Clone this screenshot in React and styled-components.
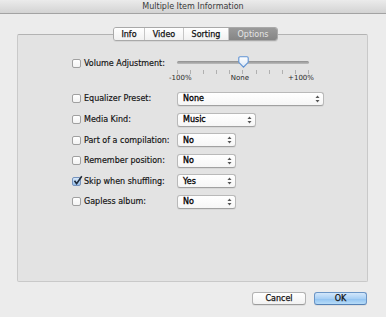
import React from 'react';
import styled, { createGlobalStyle } from 'styled-components';

const GlobalStyle = createGlobalStyle`
  html, body {
    margin: 0;
    padding: 0;
    background: #ececec;
  }
  body {
    font-family: "DejaVu Sans", "Liberation Sans", sans-serif;
    font-size: 8px;
    color: #111;
    -webkit-text-stroke: 0.15px currentColor;
  }
`;

const Window = styled.div`
  width: 386px;
  height: 317px;
  background: #ececec;
  display: flex;
  flex-direction: column;
  overflow: hidden;
`;

const TitleBar = styled.div`
  height: 14px;
  box-sizing: border-box;
  border-bottom: 1px solid #a3a3a3;
  background: linear-gradient(#ebebeb, #d3d3d3);
  display: flex;
  align-items: center;
  justify-content: center;
  color: #3a3a3a;
  font-size: 8px;
  -webkit-text-stroke: 0;
`;

const Body = styled.div`
  display: flex;
  flex-direction: column;
  padding-top: 13px;
`;

const Tabs = styled.div`
  display: flex;
  align-self: flex-start;
  margin-left: 113px;
  margin-bottom: -7px;
  height: 14px;
  box-sizing: border-box;
  border: 1px solid #a9a9a9;
  border-radius: 3px;
  overflow: hidden;
  position: relative;
  z-index: 1;
  box-shadow: 0 1px 0 rgba(0, 0, 0, 0.06);
`;

const Tab = styled.div`
  width: ${({ $w }) => $w}px;
  display: flex;
  align-items: center;
  justify-content: center;
  background: ${({ $active }) =>
    $active ? 'linear-gradient(#9a9a9a, #858585)' : 'linear-gradient(#ffffff, #f1f1f1)'};
  color: ${({ $active }) => ($active ? '#e6e6e6' : '#111')};
  border-left: ${({ $first }) => ($first ? 'none' : '1px solid #c6c6c6')};
  font-size: 8px;
  -webkit-text-stroke: ${({ $active }) => ($active ? '0' : '0.25px #111')};
`;

const GroupBox = styled.div`
  margin-left: 17px;
  width: 351px;
  height: 248px;
  box-sizing: border-box;
  background: #e3e3e3;
  border: 1px solid #c9c9c9;
  border-top-color: #b3b3b3;
  border-radius: 2px;
  padding: 21px 0 0 54px;
  display: flex;
  flex-direction: column;
  gap: 6.6px;
`;

const Row = styled.div`
  display: grid;
  grid-template-columns: 105px auto;
  align-items: ${({ $top }) => ($top ? 'start' : 'center')};
  margin-bottom: ${({ $extra }) => $extra || 0}px;
`;

const Label = styled.label`
  display: flex;
  align-items: center;
  gap: 3px;
  height: 14px;
  white-space: nowrap;
`;

const Box = styled.span`
  width: 9px;
  height: 9px;
  box-sizing: border-box;
  border: 1px solid ${({ $checked }) => ($checked ? '#7592bd' : '#a0a0a0')};
  border-radius: 2px;
  background: ${({ $checked }) =>
    $checked ? 'linear-gradient(#d5e6f8, #98c0ec)' : 'linear-gradient(#ffffff, #f3f3f3)'};
  position: relative;
  flex: none;
`;

const Check = styled.svg`
  position: absolute;
  left: 0px;
  top: -3px;
`;

const Checkbox = ({ checked }) => (
  <Box $checked={checked}>
    {checked && (
      <Check width="10" height="10" viewBox="0 0 10 10">
        <path d="M1.5 5.8 L3.6 8.6 L8.8 1.2" fill="none" stroke="#1e2a3a" strokeWidth="1.6" />
      </Check>
    )}
  </Box>
);

const Slider = styled.div`
  display: flex;
  flex-direction: column;
  width: 132px;
`;

const TrackArea = styled.div`
  height: 12px;
  position: relative;
  display: flex;
  align-items: center;
`;

const Track = styled.div`
  width: 100%;
  height: 3px;
  border-radius: 2px;
  background: linear-gradient(#8e8e8e, #bdbdbd);
`;

const Thumb = styled.svg`
  position: absolute;
  left: 61px;
  top: 0;
`;

const Ticks = styled.div`
  display: flex;
  justify-content: space-between;
  margin-top: 2px;
  height: 4px;
`;

const Tick = styled.span`
  width: 1px;
  height: 4px;
  background: #b0b0b0;
`;

const TickLabels = styled.div`
  display: flex;
  justify-content: space-between;
  width: 145px;
  margin-left: -8px;
  font-size: 7px;
  line-height: 8px;
  color: #2a2a2a;
  -webkit-text-stroke: 0;
`;

const Popup = styled.div`
  width: ${({ $w }) => $w}px;
  height: 14px;
  box-sizing: border-box;
  border: 1px solid #b9b9b9;
  border-bottom-color: #a1a1a1;
  border-radius: 3px;
  background: linear-gradient(#ffffff, #f6f6f6);
  box-shadow: 0 1px 0 rgba(0, 0, 0, 0.05);
  display: flex;
  align-items: center;
  justify-content: space-between;
  padding: 0 3px 0 5px;
  color: #000;
  -webkit-text-stroke: 0.3px #000;
`;

const Arrows = () => (
  <svg width="5" height="8" viewBox="0 0 5 8">
    <path d="M2.5 0.5 L4.5 3 L0.5 3 Z" fill="#555" />
    <path d="M2.5 7.5 L4.5 5 L0.5 5 Z" fill="#555" />
  </svg>
);

const Buttons = styled.div`
  display: flex;
  justify-content: flex-end;
  gap: 8px;
  margin-top: 10px;
  padding-right: 19px;
`;

const Button = styled.button`
  width: ${({ $w }) => $w}px;
  height: 13px;
  box-sizing: border-box;
  padding: 0;
  font-family: inherit;
  font-size: 8px;
  color: #111;
  -webkit-text-stroke: 0.25px #111;
  border-radius: 3px;
  border: 1px solid ${({ $primary }) => ($primary ? '#6b95c6' : '#b3b3b3')};
  border-bottom-color: ${({ $primary }) => ($primary ? '#5581b5' : '#9c9c9c')};
  background: ${({ $primary }) =>
    $primary
      ? 'linear-gradient(#d3e7fb, #a9d0f5 50%, #90c2f1 51%, #b7dcf8)'
      : 'linear-gradient(#ffffff, #f2f2f2)'};
  box-shadow: 0 1px 0 rgba(0, 0, 0, 0.06);
`;

const fields = [
  { label: 'Equalizer Preset:', value: 'None', w: 147 },
  { label: 'Media Kind:', value: 'Music', w: 79 },
  { label: 'Part of a compilation:', value: 'No', w: 59 },
  { label: 'Remember position:', value: 'No', w: 59 },
  { label: 'Skip when shuffling:', value: 'Yes', w: 59, checked: true },
  { label: 'Gapless album:', value: 'No', w: 59 },
];

const tabs = [
  { name: 'Info', w: 30 },
  { name: 'Video', w: 38 },
  { name: 'Sorting', w: 44 },
  { name: 'Options', w: 48, active: true },
];

export default function App() {
  return (
    <>
      <GlobalStyle />
      <Window>
        <TitleBar>Multiple Item Information</TitleBar>
        <Body>
          <Tabs>
            {tabs.map((t, i) => (
              <Tab key={t.name} $w={t.w} $active={t.active} $first={i === 0}>
                {t.name}
              </Tab>
            ))}
          </Tabs>
          <GroupBox>
            <Row $top $extra={3.4}>
              <Label>
                <Checkbox />
                Volume Adjustment:
              </Label>
              <Slider>
                <TrackArea>
                  <Track />
                  <Thumb width="11" height="12" viewBox="0 0 11 12">
                    <defs>
                      <linearGradient id="thumbFill" x1="0" y1="0" x2="0" y2="1">
                        <stop offset="0" stopColor="#ffffff" />
                        <stop offset="1" stopColor="#d9e6f6" />
                      </linearGradient>
                    </defs>
                    <path
                      d="M2 0.8 H9 Q10.2 0.8 10.2 2 V6.4 L5.5 11.2 L0.8 6.4 V2 Q0.8 0.8 2 0.8 Z"
                      fill="url(#thumbFill)"
                      stroke="#5f92d3"
                      strokeWidth="1.1"
                    />
                  </Thumb>
                </TrackArea>
                <Ticks>
                  {Array.from({ length: 11 }).map((_, i) => (
                    <Tick key={i} />
                  ))}
                </Ticks>
                <TickLabels>
                  <span>-100%</span>
                  <span>None</span>
                  <span>+100%</span>
                </TickLabels>
              </Slider>
            </Row>
            {fields.map((f) => (
              <Row key={f.label}>
                <Label>
                  <Checkbox checked={f.checked} />
                  {f.label}
                </Label>
                <Popup $w={f.w}>
                  <span>{f.value}</span>
                  <Arrows />
                </Popup>
              </Row>
            ))}
          </GroupBox>
          <Buttons>
            <Button $w={54}>Cancel</Button>
            <Button $w={53} $primary>
              OK
            </Button>
          </Buttons>
        </Body>
      </Window>
    </>
  );
}
